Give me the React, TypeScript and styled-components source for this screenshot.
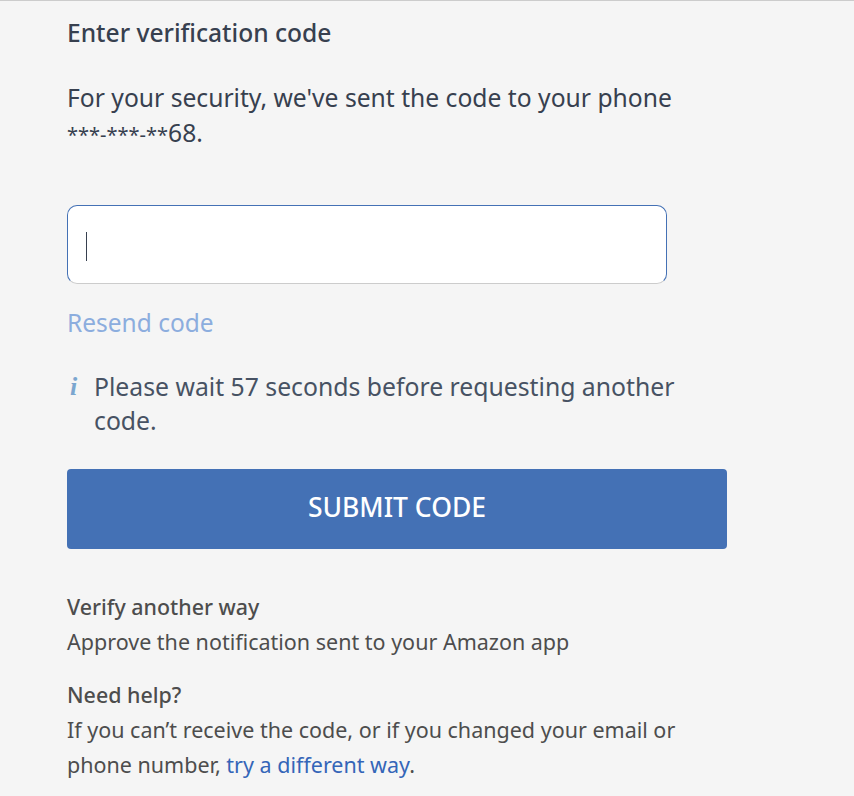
import React from 'react'
import styled, { createGlobalStyle } from 'styled-components'

const GlobalStyle = createGlobalStyle`
  html, body {
    margin: 0;
    padding: 0;
    background: #f5f5f5;
  }
  body {
    font-family: "Noto Sans", "Open Sans", sans-serif;
  }
`

const Page = styled.div`
  box-sizing: border-box;
  width: 854px;
  height: 796px;
  overflow: hidden;
  border-top: 1px solid #ccc;
  padding: 15px 0 0 67px;
`

const Title = styled.h1`
  margin: 0;
  font-size: 24.6px;
  line-height: 34px;
  font-weight: 500;
  color: #37404f;
`

const Lead = styled.p`
  margin: 30px 0 0;
  width: 640px;
  font-size: 24.67px;
  line-height: 35px;
  font-weight: 400;
  color: #37404f;
`

const Mask = styled.span`
  font-size: 20px;
`

const CodeField = styled.div`
  box-sizing: border-box;
  display: flex;
  align-items: center;
  width: 600px;
  height: 79px;
  margin-top: 53px;
  padding-left: 18px;
  background: #fff;
  border: 1px solid #4471b5;
  border-bottom-color: #ccc;
  border-radius: 10px;
`

const Caret = styled.span`
  display: block;
  width: 1px;
  height: 29px;
  margin-top: 3px;
  background: #37404f;
`

const Resend = styled.div`
  margin-top: 21px;
  font-size: 24.5px;
  line-height: 35px;
  color: #8cadde;
`

const Notice = styled.div`
  display: flex;
  margin-top: 30px;
  width: 620px;
`

const InfoIcon = styled.span`
  flex: none;
  box-sizing: border-box;
  width: 27px;
  padding-left: 3px;
  font-family: "Liberation Serif", serif;
  font-style: italic;
  font-weight: 700;
  font-size: 26px;
  line-height: 34px;
  color: #7ba6cf;
`

const NoticeText = styled.p`
  margin: 0;
  font-size: 24.75px;
  line-height: 34px;
  color: #475263;
`

const Submit = styled.button`
  display: block;
  width: 660px;
  height: 80px;
  margin-top: 31px;
  padding: 0 0 4px;
  border: 0;
  border-radius: 4px;
  background: #4471b5;
  color: #fff;
  font-family: inherit;
  font-size: 26.5px;
  font-weight: 500;
`

const HelpBlock = styled.section<{ $gap: number }>`
  margin-top: ${(p) => p.$gap}px;
  width: 640px;
  color: #4d4d4d;
`

const HelpTitle = styled.h2`
  margin: 0 0 2px;
  font-size: 21.4px;
  line-height: 30px;
  font-weight: 500;
  color: #4d4d4d;
`

const HelpText = styled.p`
  margin: 0;
  font-size: 21.5px;
  line-height: 35px;
`

const HelpLink = styled.a`
  color: #3465b8;
  text-decoration: none;
`

export default function App() {
  return (
    <Page>
      <GlobalStyle />
      <Title>Enter verification code</Title>
      <Lead>
        For your security, we've sent the code to your phone <Mask>***-***-**</Mask>68.
      </Lead>
      <CodeField>
        <Caret />
      </CodeField>
      <Resend>Resend code</Resend>
      <Notice>
        <InfoIcon>i</InfoIcon>
        <NoticeText>Please wait 57 seconds before requesting another code.</NoticeText>
      </Notice>
      <Submit>SUBMIT CODE</Submit>
      <HelpBlock $gap={43}>
        <HelpTitle>Verify another way</HelpTitle>
        <HelpText>Approve the notification sent to your Amazon app</HelpText>
      </HelpBlock>
      <HelpBlock $gap={21}>
        <HelpTitle>Need help?</HelpTitle>
        <HelpText>
          If you can’t receive the code, or if you changed your email or phone number,{' '}
          <HelpLink href="#">try a different way</HelpLink>.
        </HelpText>
      </HelpBlock>
    </Page>
  )
}
